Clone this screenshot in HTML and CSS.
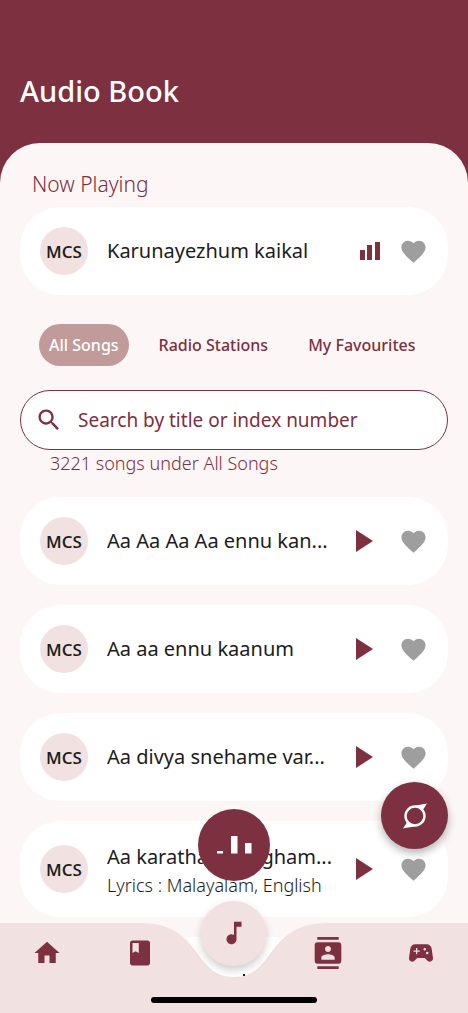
FILE: index.html
```html
<!DOCTYPE html>
<html lang="en">
<head>
<meta charset="utf-8">
<meta name="viewport" content="width=device-width, initial-scale=1">
<title>Audio Book</title>
<link rel="stylesheet" href="styles.css">
</head>
<body>
<svg class="defs" aria-hidden="true">
  <symbol id="heart" viewBox="0 0 24 24"><path d="M12 21.35l-1.45-1.32C5.4 15.36 2 12.28 2 8.5 2 5.42 4.42 3 7.5 3c1.74 0 3.41.81 4.5 2.09C13.09 3.81 14.76 3 16.5 3 19.58 3 22 5.42 22 8.5c0 3.78-3.4 6.86-8.55 11.54L12 21.35z"/></symbol>
  <symbol id="play" viewBox="0 0 24 24"><path d="M5 1l17 11L5 23z"/></symbol>
</svg>
<div class="app">
  <header class="header"><h1 class="title">Audio Book</h1></header>
  <main class="panel">
    <h2 class="section">Now Playing</h2>
    <article class="card">
      <span class="avatar">MCS</span>
      <div class="info"><p class="song">Karunayezhum kaikal</p></div>
      <button class="icon-btn" aria-label="Playing"><svg class="bars" viewBox="0 0 20 18"><path d="M0 8h5v10H0zM7 3h5v15H7zM15 0h5v18h-5z"/></svg></button>
      <button class="icon-btn like" aria-label="Favourite"><svg><use href="#heart"/></svg></button>
    </article>
    <div class="tabs">
      <button class="tab active">All Songs</button>
      <button class="tab">Radio Stations</button>
      <button class="tab">My Favourites</button>
    </div>
    <label class="search">
      <svg viewBox="0 0 24 24"><path d="M15.5 14h-.79l-.28-.27C15.41 12.59 16 11.11 16 9.5 16 5.91 13.09 3 9.5 3S3 5.91 3 9.5 5.91 16 9.5 16c1.61 0 3.09-.59 4.23-1.57l.27.28v.79l5 4.99L20.49 19l-4.99-5zm-6 0C7.01 14 5 11.99 5 9.5S7.01 5 9.5 5 14 7.01 14 9.5 11.99 14 9.5 14z"/></svg>
      <input type="text" aria-label="Search songs" placeholder="Search by title or index number">
    </label>
    <p class="count">3221 songs under All Songs</p>
    <div class="list">
      <article class="card">
        <span class="avatar">MCS</span>
        <div class="info"><p class="song">Aa Aa Aa Aa ennu kan...</p></div>
        <button class="icon-btn play" aria-label="Play"><svg><use href="#play"/></svg></button>
        <button class="icon-btn like" aria-label="Favourite"><svg><use href="#heart"/></svg></button>
      </article>
      <article class="card">
        <span class="avatar">MCS</span>
        <div class="info"><p class="song">Aa aa ennu kaanum</p></div>
        <button class="icon-btn play" aria-label="Play"><svg><use href="#play"/></svg></button>
        <button class="icon-btn like" aria-label="Favourite"><svg><use href="#heart"/></svg></button>
      </article>
      <article class="card">
        <span class="avatar">MCS</span>
        <div class="info"><p class="song">Aa divya snehame var...</p></div>
        <button class="icon-btn play" aria-label="Play"><svg><use href="#play"/></svg></button>
        <button class="icon-btn like" aria-label="Favourite"><svg><use href="#heart"/></svg></button>
      </article>
      <article class="card">
        <span class="avatar">MCS</span>
        <div class="info"><p class="song">Aa karathaari angham...</p><p class="lyrics">Lyrics : Malayalam, English</p></div>
        <button class="icon-btn play" aria-label="Play"><svg><use href="#play"/></svg></button>
        <button class="icon-btn like" aria-label="Favourite"><svg><use href="#heart"/></svg></button>
      </article>
      <div class="card"></div>
    </div>
  </main>

  <button class="float" aria-label="Refresh">
    <svg viewBox="0 0 26 28"><circle cx="13" cy="14" r="9.5" fill="none" stroke="#fff" stroke-width="2.400"/><path fill="#fff" d="M7 6.500C10 4 14 3.500 25 1.500L20.500 8.500A9.500 9.500 0 0 0 7 6.500zM19 21.500C16 24 12 24.500 1 26.500L5.500 19.500A9.500 9.500 0 0 0 19 21.500z"/></svg>
  </button>
  <button class="player" aria-label="Now playing">
    <svg viewBox="0 0 35 18"><path d="M0 15h6v2.500H0zM14 0h6.500v17.500H14zM28 7h6.500v10.500H28z"/></svg>
  </button>

  <nav class="nav" aria-label="Main">
    <div class="nav-bg">
      <span class="fill"></span>
      <svg viewBox="0 0 188 90"><path d="M0 0C63 0 52 54 94 54S125 0 188 0V90H0z" fill="#f1e2e1"/><path d="M103 51h2v2h-2z"/></svg>
      <span class="fill"></span>
    </div>
    <div class="nav-items">
      <a href="#home" aria-label="Home"><svg viewBox="0 0 24 24"><path d="M10 20v-6h4v6h5v-8h3L12 3 2 12h3v8z"/></svg></a>
      <a href="#books" aria-label="Books"><svg viewBox="0 0 24 24"><path d="M18 2H6c-1.100 0-2 .9-2 2v16c0 1.100.9 2 2 2h12c1.100 0 2-.9 2-2V4c0-1.100-.9-2-2-2zM6 4h5v8l-2.500-1.500L6 12V4z"/></svg></a>
      <a class="music" href="#music" aria-label="Music"><svg viewBox="0 0 24 24"><path d="M12 3v10.550c-.59-.34-1.270-.55-2-.55-2.210 0-4 1.790-4 4s1.790 4 4 4 4-1.790 4-4V7h4V3h-6z"/></svg></a>
      <a href="#contacts" aria-label="Contacts"><svg class="wide" viewBox="0 0 24 24"><path d="M20 0H4v2h16V0zM4 24h16v-2H4v2zM20 4H4c-1.100 0-2 .9-2 2v12c0 1.100.9 2 2 2h16c1.100 0 2-.9 2-2V6c0-1.100-.9-2-2-2zm-8 2.750c1.240 0 2.250 1.010 2.250 2.250s-1.010 2.250-2.250 2.250S9.750 10.240 9.750 9 10.760 6.750 12 6.750zM17 17H7v-1.500c0-1.670 3.330-2.500 5-2.500s5 .83 5 2.500V17z"/></svg></a>
      <a href="#games" aria-label="Games"><svg viewBox="0 0 24 24"><path d="M21.580 16.090l-1.090-7.660C20.210 6.460 18.520 5 16.530 5H7.470C5.480 5 3.790 6.460 3.510 8.430l-1.090 7.660C2.200 17.630 3.390 19 4.940 19c.68 0 1.320-.27 1.800-.75L9 16h6l2.250 2.250c.48.48 1.130.75 1.800.75 1.560 0 2.750-1.370 2.530-2.910zM11 11H9v2H8v-2H6v-1h2V8h1v2h2v1zm4-1c-.55 0-1-.45-1-1s.45-1 1-1 1 .45 1 1-.45 1-1 1zm2 3c-.55 0-1-.45-1-1s.45-1 1-1 1 .45 1 1-.45 1-1 1z"/></svg></a>
    </div>
    <span class="indicator"></span>
  </nav>
</div>
</body>
</html>
```
FILE: styles.css
```css
* { box-sizing: border-box; }
body {
  margin: 0;
  background: #7c3040;
  color: #1c1c1c;
  font-family: "Noto Sans", "Open Sans", sans-serif;
}
h1, h2, p { margin: 0; font-weight: 400; }
button { border: 0; padding: 0; background: none; font: inherit; color: #7c3040; }
svg { display: block; fill: currentColor; }
.defs { display: none; }
.app { display: flex; flex-direction: column; height: 100vh; overflow: hidden; }
.header { padding: 71px 20px 32px; }
.title { color: #fff; font-size: 29px; line-height: 40px; font-weight: 500; }
.panel {
  flex: 1;
  min-height: 0;
  overflow: hidden;
  padding: 27px 20px 0;
  background: #fdf6f6;
  border-radius: 40px 40px 0 0;
}
.section { padding-left: 12px; font-size: 21px; font-weight: 300; line-height: 28px; margin-bottom: 9px; color: #7c3040; }
.card {
  display: flex;
  align-items: center;
  min-height: 88px;
  padding: 20px;
  background: #fff;
  border-radius: 40px;
}
.avatar {
  display: grid;
  place-items: center;
  flex: none;
  width: 48px;
  height: 48px;
  margin-right: 19px;
  border-radius: 50%;
  background: #f1e2e1;
  font-family: "Open Sans", sans-serif;
  font-size: 17px;
  font-weight: 600;
}
.info { flex: 1; min-width: 0; white-space: nowrap; }
.song { font-size: 20px; line-height: 32px; }
.lyrics { font-size: 18px; font-weight: 300; line-height: 24px; }
.icon-btn { display: grid; place-items: center; flex: none; width: 30px; height: 30px; }
.icon-btn svg { width: 24px; height: 24px; }
.icon-btn .bars { width: 20px; height: 18px; }
.like { color: #9e9e9e; margin-left: 13px; }
.like svg { width: 29px; height: 29px; }
.play { margin-right: 7px; }
.tabs { display: flex; gap: 20px; padding: 29px 19px 24px; }
.tab { height: 42px; padding: 0 10px; border-radius: 21px; font-size: 16px; font-weight: 500; white-space: nowrap; }
.active { background: #c09b9a; color: #fff; }
.search {
  display: flex;
  align-items: center;
  gap: 15px;
  height: 60px;
  padding: 0 14px;
  border: 1px solid #7c3040;
  border-radius: 30px;
  background: #fff;
  color: #7c3040;
}
.search svg { width: 28px; height: 28px; flex: none; }
.search input { flex: 1; min-width: 0; padding: 0; border: 0; outline: 0; background: none; font: inherit; font-size: 19px; color: inherit; }
.search input::placeholder { color: #7c3040; opacity: 1; }
.count { padding-left: 30px; font-size: 18px; font-weight: 300; line-height: 27px; margin-bottom: 20px; color: #7c3040; }
.list { display: flex; flex-direction: column; gap: 20px; }
.float, .player { position: fixed; display: grid; place-items: center; border-radius: 50%; background: #7c3040; color: #fff; }
.float { right: 20px; bottom: 164px; width: 67px; height: 67px; box-shadow: 0 4px 8px rgba(0, 0, 0, 0.3); }
.float svg { width: 26px; height: 28px; }
.player { left: calc(50% - 36px); bottom: 132px; width: 72px; height: 72px; }
.player svg { width: 35px; height: 18px; }
.nav { position: fixed; left: 0; right: 0; bottom: 0; height: 90px; color: #7c3040; }
.nav-bg { position: absolute; inset: 0; display: flex; color: #1c1c1c; }
.nav-bg svg { flex: none; width: 188px; height: 90px; }
.fill { flex: 1; background: #f1e2e1; }
.nav-items { position: relative; display: grid; grid-template-columns: repeat(5, 1fr); height: 60px; place-items: center; }
.nav a { color: inherit; }
.nav a svg { width: 30px; height: 30px; }
.nav a .wide { width: 32px; height: 32px; }
.nav .music { display: grid; place-items: center; width: 65px; height: 65px; margin-top: -40px; border-radius: 50%; background: #f1e2e1; box-shadow: 0 4px 8px rgba(0, 0, 0, 0.2); }
.indicator { position: absolute; left: 50%; bottom: 10px; width: 166px; height: 6px; margin-left: -83px; border-radius: 3px; background: #000; }
```
